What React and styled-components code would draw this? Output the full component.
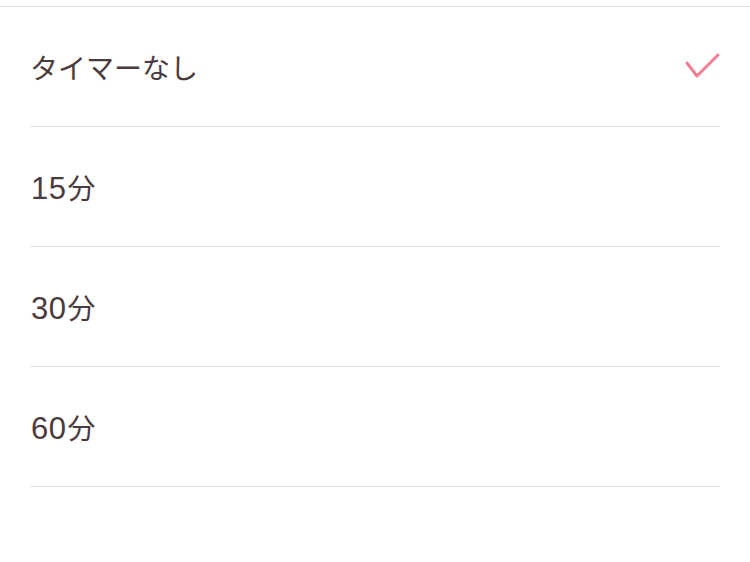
import React, { useState } from 'react';
import styled, { createGlobalStyle } from 'styled-components';

const GlobalStyle = createGlobalStyle`
  html, body {
    margin: 0;
    padding: 0;
    background: #ffffff;
  }
  body {
    font-family: "Noto Sans CJK JP", "Noto Sans", sans-serif;
    color: #4b3b3e;
  }
`;

const options = [
  { id: 'none', text: 'タイマーなし' },
  { id: '15', num: '15', text: '分' },
  { id: '30', num: '30', text: '分' },
  { id: '60', num: '60', text: '分' },
];

const App = () => {
  const [selected, setSelected] = useState('none');

  return (
    <Page>
      <GlobalStyle />
      <List>
        {options.map((opt) => (
          <Row key={opt.id} onClick={() => setSelected(opt.id)}>
            <Label>
              {opt.num && <Num>{opt.num}</Num>}
              {opt.text}
            </Label>
            {selected === opt.id && (
              <Check width="36" height="28" viewBox="0 0 36 28">
                <polyline points="2,10 12,23 33,2" />
              </Check>
            )}
          </Row>
        ))}
      </List>
    </Page>
  );
};

const Page = styled.div`
  padding-top: 6px;
  width: 750px;
  height: 556px;
  background: #ffffff;
`;

const List = styled.ul`
  list-style: none;
  margin: 0;
  padding: 0 30px;
  border-top: 1px solid #e4e4e4;
`;

const Row = styled.li`
  display: flex;
  align-items: center;
  justify-content: space-between;
  height: 119px;
  border-bottom: 1px solid #e4e4e4;
  cursor: pointer;
`;

const Label = styled.span`
  font-size: 28px;
  line-height: 1;
`;

const Num = styled.span`
  font-family: "Liberation Sans", Arial, sans-serif;
  font-size: 31px;
  line-height: 0;
  margin-left: 1px;
  margin-right: 1px;
  letter-spacing: 0.5px;
`;

const Check = styled.svg`
  margin-right: -1px;
  fill: none;
  stroke: #ef7f95;
  stroke-width: 3;
  stroke-linecap: round;
  stroke-linejoin: round;
`;

export default App;
